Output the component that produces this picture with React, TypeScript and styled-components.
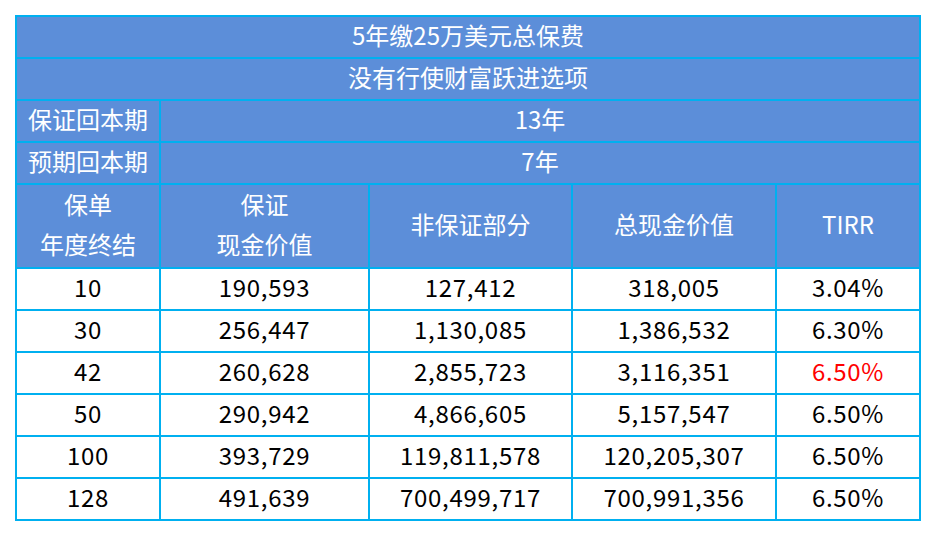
import React from "react";
import styled, { createGlobalStyle } from "styled-components";

const GlobalStyle = createGlobalStyle`
  html, body { margin: 0; padding: 0; background: #ffffff; }
  body { font-family: "Noto Sans CJK SC", "Noto Sans", sans-serif; }
`;

const Page = styled.div`
  padding: 15px;
`;

const Table = styled.div`
  display: grid;
  grid-template-columns: 142px 207px 201px 202px 142px;
  grid-auto-rows: 40px;
  gap: 2px;
  padding: 2px;
  width: max-content;
  background: #00b0f0;
  font-family: "Noto Sans CJK SC", "Noto Sans", sans-serif;
  font-size: 24px;
`;

const Cell = styled.div<{ $span?: number; $head?: boolean; $red?: boolean; $tall?: boolean }>`
  grid-column: span ${(p) => p.$span ?? 1};
  ${(p) => (p.$tall ? "grid-row: span 2;" : "")}
  display: flex;
  flex-direction: column;
  align-items: center;
  justify-content: center;
  text-align: center;
  line-height: 40px;
  padding-bottom: 4px;
  box-sizing: border-box;
  letter-spacing: ${(p) => (p.$head ? "0" : "0.7px")};
  background: ${(p) => (p.$head ? "#5c8ed9" : "#ffffff")};
  color: ${(p) => (p.$red ? "#ff0000" : p.$head ? "#ffffff" : "#000000")};
  white-space: nowrap;
`;

const rows: [string, string, string, string, string, boolean?][] = [
  ["10", "190,593", "127,412", "318,005", "3.04%"],
  ["30", "256,447", "1,130,085", "1,386,532", "6.30%"],
  ["42", "260,628", "2,855,723", "3,116,351", "6.50%", true],
  ["50", "290,942", "4,866,605", "5,157,547", "6.50%"],
  ["100", "393,729", "119,811,578", "120,205,307", "6.50%"],
  ["128", "491,639", "700,499,717", "700,991,356", "6.50%"],
];

export default function App() {
  return (
    <Page>
      <GlobalStyle />
      <Table>
        <Cell $head $span={5}>5年缴25万美元总保费</Cell>
        <Cell $head $span={5}>没有行使财富跃进选项</Cell>
        <Cell $head>保证回本期</Cell>
        <Cell $head $span={4}>13年</Cell>
        <Cell $head>预期回本期</Cell>
        <Cell $head $span={4}>7年</Cell>
        <Cell $head $tall>
          <span>保单</span>
          <span>年度终结</span>
        </Cell>
        <Cell $head $tall>
          <span>保证</span>
          <span>现金价值</span>
        </Cell>
        <Cell $head $tall>非保证部分</Cell>
        <Cell $head $tall>总现金价值</Cell>
        <Cell $head $tall>TIRR</Cell>
        {rows.map((r) => (
          <React.Fragment key={r[0]}>
            <Cell>{r[0]}</Cell>
            <Cell>{r[1]}</Cell>
            <Cell>{r[2]}</Cell>
            <Cell>{r[3]}</Cell>
            <Cell $red={!!r[5]}>{r[4]}</Cell>
          </React.Fragment>
        ))}
      </Table>
    </Page>
  );
}
